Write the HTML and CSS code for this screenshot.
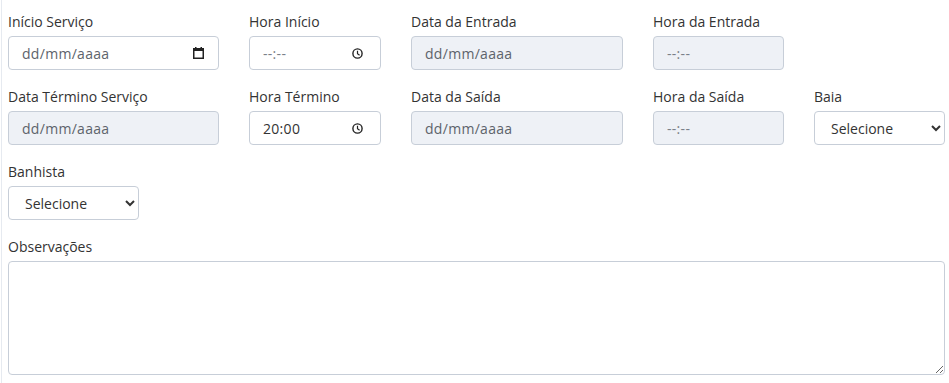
FILE: index.html
```html
<!DOCTYPE html>
<html lang="pt-BR">
<head>
	<meta charset="UTF-8">
	<title>Serviço</title>
	<link rel="stylesheet" href="styles.css">
</head>
<body>
	<div class="page">
		<div class="row">
			<div class="group col-a">
				<label>Início Serviço</label>
				<div class="field">
					<input type="text" placeholder="dd/mm/aaaa">
					<svg class="ico" width="11" height="12" viewBox="0 0 11 12"><rect x="0.75" y="1.75" width="9.5" height="9.5" fill="none" stroke="#222" stroke-width="1.5"/><rect x="0" y="1" width="11" height="3" fill="#222"/><rect x="2" y="0" width="1.5" height="2" fill="#222"/><rect x="7.5" y="0" width="1.5" height="2" fill="#222"/></svg>
				</div>
			</div>
			<div class="group col-b">
				<label>Hora Início</label>
				<div class="field time">
					<input type="text" placeholder="--:--">
					<svg class="ico clock" width="11" height="11" viewBox="0 0 11 11"><circle cx="5.5" cy="5.5" r="4.6" fill="none" stroke="#222" stroke-width="1.4"/><path d="M5.5 2.8V5.7L7.6 7.3" fill="none" stroke="#222" stroke-width="1.2"/></svg>
				</div>
			</div>
			<div class="group col-c">
				<label>Data da Entrada</label>
				<div class="field disabled"><input type="text" placeholder="dd/mm/aaaa" disabled></div>
			</div>
			<div class="group col-d">
				<label>Hora da Entrada</label>
				<div class="field disabled time"><input type="text" placeholder="--:--" disabled></div>
			</div>
		</div>

		<div class="row">
			<div class="group col-a">
				<label>Data Término Serviço</label>
				<div class="field disabled"><input type="text" placeholder="dd/mm/aaaa" disabled></div>
			</div>
			<div class="group col-b">
				<label>Hora Término</label>
				<div class="field time">
					<input type="text" value="20:00">
					<svg class="ico clock" width="11" height="11" viewBox="0 0 11 11"><circle cx="5.5" cy="5.5" r="4.6" fill="none" stroke="#222" stroke-width="1.4"/><path d="M5.5 2.8V5.7L7.6 7.3" fill="none" stroke="#222" stroke-width="1.2"/></svg>
				</div>
			</div>
			<div class="group col-c">
				<label>Data da Saída</label>
				<div class="field disabled"><input type="text" placeholder="dd/mm/aaaa" disabled></div>
			</div>
			<div class="group col-d">
				<label>Hora da Saída</label>
				<div class="field disabled time"><input type="text" placeholder="--:--" disabled></div>
			</div>
			<div class="group col-e">
				<label>Baia</label>
				<select class="select">
					<option>Selecione</option>
				</select>
			</div>
		</div>

		<div class="row">
			<div class="group col-e">
				<label>Banhista</label>
				<select class="select">
					<option>Selecione</option>
				</select>
			</div>
		</div>

		<div class="group last">
			<label>Observações</label>
			<textarea class="obs"></textarea>
		</div>
	</div>
</body>
</html>
```

FILE: styles.css
```css
*{
	box-sizing: border-box;
}
body{
	margin: 0;
	font-family: "Open Sans", "Noto Sans", sans-serif;
	font-size: 14px;
	color: #333;
	background: #fff;
}
.page{
	margin-left: 1px;
	border-left: 1px solid #e6eaf0;
	padding: 11px 0 8px 6px;
	width: 946px;
	min-height: 383px;
}
.row{
	display: flex;
	gap: 30px;
}
.group{
	margin-bottom: 16px;
}
.group.last{
	margin-bottom: 0;
}
.col-a{ width: 211px; }
.col-b{ width: 132px; }
.col-c{ width: 212px; }
.col-d{ width: 131px; }
.col-e{ width: 131px; }

label{
	display: block;
	line-height: 21px;
	margin-bottom: 4px;
	color: #333;
}
.field{
	display: flex;
	align-items: center;
	height: 34px;
	border: 1px solid #c7ced8;
	border-radius: 4px;
	background: #fff;
	padding: 0 14px 0 13px;
}
.field.time{
	padding-right: 17px;
}
.field input{
	flex: 1;
	min-width: 0;
	border: 0;
	outline: 0;
	padding: 0;
	font: inherit;
	letter-spacing: 0.3px;
	color: #333;
	background: transparent;
}
.field input::placeholder{
	color: #5d636b;
	opacity: 1;
}
.field.time input::placeholder{
	color: #7a8088;
}
.field.disabled{
	background: #eef1f6;
}
.ico{
	flex: none;
	display: block;
}
.select{
	display: block;
	width: 100%;
	height: 34px;
	padding: 6px 12px;
	border: 1px solid #c7ced8;
	border-radius: 4px;
	background: #fff;
	font: inherit;
	color: #333;
}
.obs{
	display: block;
	width: 937px;
	height: 114px;
	border: 1px solid #c7ced8;
	border-radius: 4px;
	font: inherit;
	padding: 6px 12px;
	margin: 0;
}
```
